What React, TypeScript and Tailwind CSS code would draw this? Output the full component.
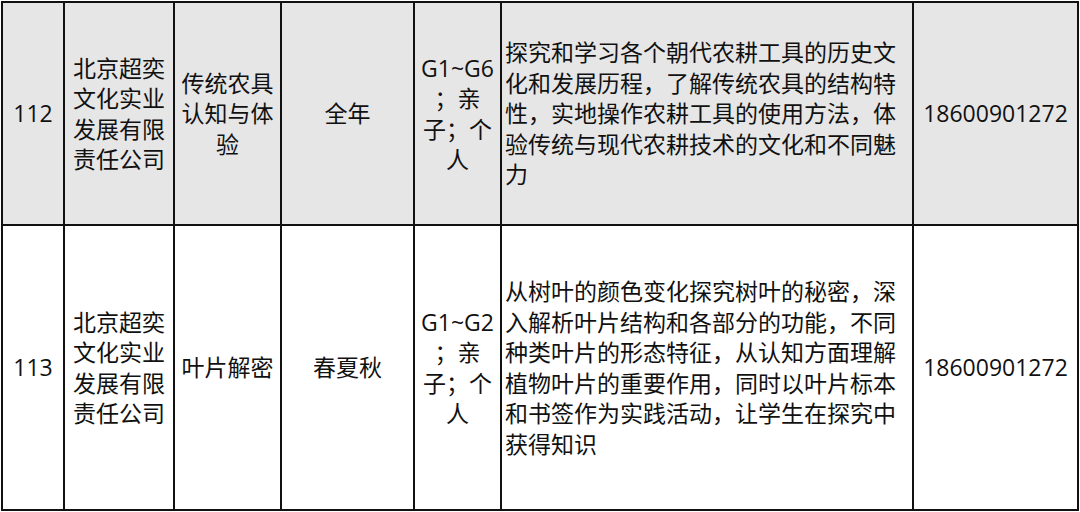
import React from 'react';

type Row = {
  no: string;
  company: string[];
  name: string[];
  season: string;
  grade: string[];
  desc: string[];
  phone: string;
  shaded: boolean;
};

const rows: Row[] = [
  {
    no: '112',
    company: ['北京超奕', '文化实业', '发展有限', '责任公司'],
    name: ['传统农具', '认知与体', '验'],
    season: '全年',
    grade: ['G1~G6', '；亲', '子；个', '人'],
    desc: [
      '探究和学习各个朝代农耕工具的历史文',
      '化和发展历程，了解传统农具的结构特',
      '性，实地操作农耕工具的使用方法，体',
      '验传统与现代农耕技术的文化和不同魅',
      '力',
    ],
    phone: '18600901272',
    shaded: true,
  },
  {
    no: '113',
    company: ['北京超奕', '文化实业', '发展有限', '责任公司'],
    name: ['叶片解密'],
    season: '春夏秋',
    grade: ['G1~G2', '；亲', '子；个', '人'],
    desc: [
      '从树叶的颜色变化探究树叶的秘密，深',
      '入解析叶片结构和各部分的功能，不同',
      '种类叶片的形态特征，从认知方面理解',
      '植物叶片的重要作用，同时以叶片标本',
      '和书签作为实践活动，让学生在探究中',
      '获得知识',
    ],
    phone: '18600901272',
    shaded: false,
  },
];

function Cell({ lines, shaded, left }: { lines: string[]; shaded: boolean; left?: boolean }) {
  return (
    <div
      className={`flex flex-col justify-center overflow-visible ${shaded ? 'bg-[#e6e6e6]' : 'bg-white'} ${
        left ? 'items-start pl-[3px] text-left' : 'items-center text-center'
      }`}
    >
      {lines.map((line, i) => (
        <div key={i} className="whitespace-nowrap leading-[30.5px]">
          {line}
        </div>
      ))}
    </div>
  );
}

export default function App() {
  return (
    <div className="w-[1080px] h-[512px] bg-white pl-[1px] pt-[1px] font-['Open_Sans','Noto_Sans_CJK_SC',sans-serif] text-[23px] text-[#111]">
      <div className="grid w-[1078px] grid-cols-[60px_108px_105px_131px_85px_410px_163px] grid-rows-[221px_283px] gap-[2px] bg-[#111] p-[2px]">
        {rows.map((r) => (
          <React.Fragment key={r.no}>
            <Cell lines={[r.no]} shaded={r.shaded} />
            <Cell lines={r.company} shaded={r.shaded} />
            <Cell lines={r.name} shaded={r.shaded} />
            <Cell lines={[r.season]} shaded={r.shaded} />
            <Cell lines={r.grade} shaded={r.shaded} />
            <Cell lines={r.desc} shaded={r.shaded} left />
            <Cell lines={[r.phone]} shaded={r.shaded} />
          </React.Fragment>
        ))}
      </div>
    </div>
  );
}
